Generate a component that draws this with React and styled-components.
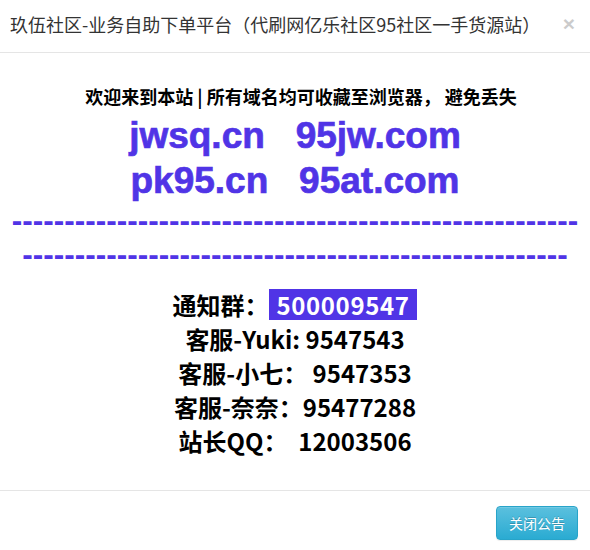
import React from "react";
import styled, { createGlobalStyle } from "styled-components";

const BLUE = "#5034e6";

const Global = createGlobalStyle`
  html, body { margin: 0; padding: 0; background: #fff; }
  body { font-family: "Noto Sans CJK SC", "Liberation Sans", sans-serif; }
  * { box-sizing: border-box; }
`;

const Modal = styled.div`
  width: 590px;
  background: #fff;
`;

const Header = styled.div`
  display: flex;
  align-items: flex-start;
  justify-content: space-between;
  padding: 11px 15px 15px 10px;
  border-bottom: 1px solid #e5e5e5;
`;

const Title = styled.h4`
  margin: 0;
  font-size: 18px;
  font-weight: 400;
  line-height: 26px;
  color: #333;
  white-space: nowrap;
  font-family: "Noto Sans CJK SC", sans-serif;
`;

const Close = styled.button`
  border: 0;
  background: transparent;
  padding: 0;
  margin-top: 2px;
  font-family: "Liberation Sans", sans-serif;
  font-size: 21px;
  font-weight: 700;
  line-height: 1;
  color: #000;
  opacity: 0.2;
  cursor: pointer;
`;

const Body = styled.div`
  height: 437px;
  padding: 30px 10px 0;
  display: flex;
  flex-direction: column;
  align-items: center;
  text-align: center;
`;

const Welcome = styled.div`
  font-size: 18px;
  line-height: 26px;
  font-weight: 700;
  color: #000;
  margin-bottom: 4px;
  padding-left: 12px;
  white-space: pre;
`;

const Domain = styled.div`
  font-family: "Liberation Sans", Arial, sans-serif;
  font-size: 37px;
  line-height: 45px;
  font-weight: 700;
  color: ${BLUE};
  -webkit-text-stroke: 0.7px ${BLUE};
  white-space: pre;
`;

const DashLine = styled.div`
  font-family: "Liberation Sans", Arial, sans-serif;
  font-size: 31.5px;
  line-height: 34px;
  font-weight: 700;
  color: ${BLUE};
  white-space: nowrap;
`;

const Contacts = styled.div`
  margin-top: 17px;
  display: flex;
  flex-direction: column;
  align-items: center;
`;

const ContactLine = styled.div`
  font-size: 24px;
  line-height: 34px;
  font-weight: 700;
  color: #000;
  white-space: pre;
`;

const Highlight = styled.span`
  display: inline-block;
  height: 31px;
  line-height: 31px;
  padding: 0 8px;
  letter-spacing: 0.6px;
  background: ${BLUE};
  color: #fff;
  vertical-align: top;
  margin-top: 1px;
`;

const Footer = styled.div`
  display: flex;
  justify-content: flex-end;
  padding: 15px 12px 15px 15px;
  border-top: 1px solid #e5e5e5;
`;

const Button = styled.button`
  height: 34px;
  padding: 0 12px;
  font-size: 14px;
  line-height: 20px;
  font-family: "Noto Sans CJK SC", sans-serif;
  color: #fff;
  border: 1px solid #28a4c9;
  border-radius: 4px;
  background: linear-gradient(to bottom, #5bc0de 0%, #2aabd2 100%);
  text-shadow: 0 -1px 0 rgba(0, 0, 0, 0.2);
  box-shadow: inset 0 1px 0 rgba(255, 255, 255, 0.15), 0 1px 1px rgba(0, 0, 0, 0.075);
  cursor: pointer;
`;

export default function App() {
  return (
    <>
      <Global />
      <Modal>
        <Header>
          <Title>玖伍社区-业务自助下单平台（代刷网亿乐社区95社区一手货源站）</Title>
          <Close aria-label="close">×</Close>
        </Header>
        <Body>
          <Welcome>欢迎来到本站 | 所有域名均可收藏至浏览器， 避免丢失</Welcome>
          <Domain>{"jwsq.cn   95jw.com"}</Domain>
          <Domain>{"pk95.cn   95at.com"}</Domain>
          <DashLine>{"-".repeat(54)}</DashLine>
          <DashLine>{"-".repeat(52)}</DashLine>
          <Contacts>
            <ContactLine>
              通知群：<Highlight>500009547</Highlight>
            </ContactLine>
            <ContactLine>客服-Yuki: 9547543</ContactLine>
            <ContactLine>客服-小七： 9547353</ContactLine>
            <ContactLine>客服-奈奈：95477288</ContactLine>
            <ContactLine>站长QQ：  12003506</ContactLine>
          </Contacts>
        </Body>
        <Footer>
          <Button>关闭公告</Button>
        </Footer>
      </Modal>
    </>
  );
}
